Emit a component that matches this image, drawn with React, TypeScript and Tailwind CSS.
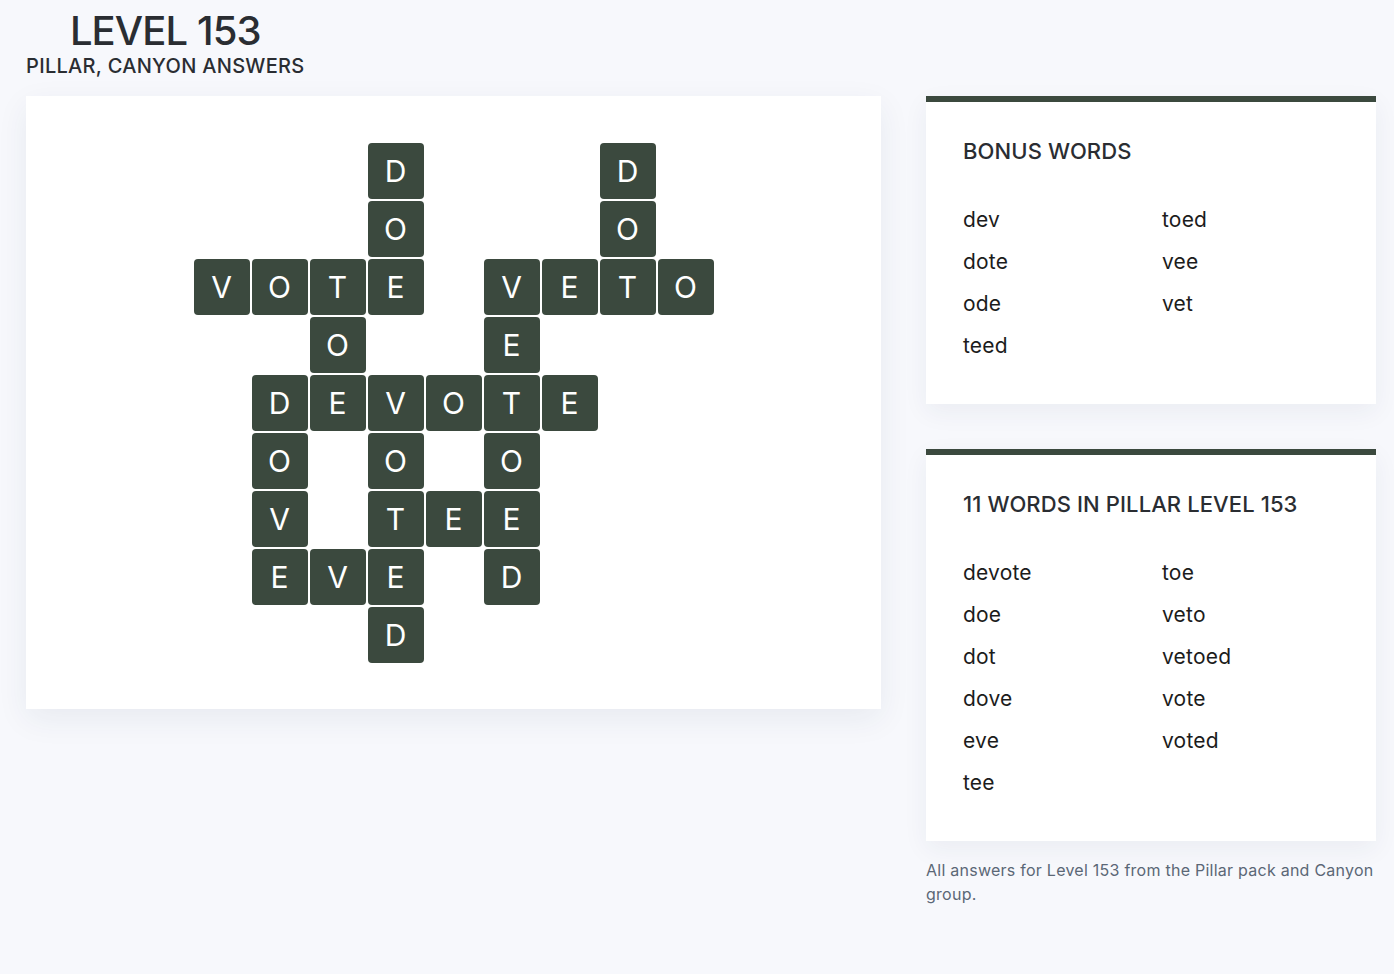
import React from "react";

const grid: string[] = [
  "...D...D.",
  "...O...O.",
  "VOTE.VETO",
  "..O..E...",
  ".DEVOTE..",
  ".O.O.O...",
  ".V.TEE...",
  ".EVE.D...",
  "...D.....",
];

const bonus = ["dev", "dote", "ode", "teed", "toed", "vee", "vet"];
const words = ["devote", "doe", "dot", "dove", "eve", "tee", "toe", "veto", "vetoed", "vote", "voted"];

function WordPanel({ title, items, rows }: { title: string; items: string[]; rows: number }) {
  const col1 = items.slice(0, rows);
  const col2 = items.slice(rows);
  return (
    <div className="bg-white border-t-[6px] border-[#3b493e] px-[37px] pt-[35px] pb-[37px] shadow-[0_8px_24px_rgba(30,50,90,0.06)]">
      <h2 className="text-[22px] leading-[28px] font-medium text-[#2a2d32] tracking-[0.1px]">{title}</h2>
      <div className="mt-[34px] flex">
        <div className="w-[199px] flex flex-col">
          {col1.map((w) => (
            <div key={w} className="h-[42px] leading-[42px] text-[21px] tracking-[0.2px] text-[#1c1c1c]">{w}</div>
          ))}
        </div>
        <div className="flex flex-col">
          {col2.map((w) => (
            <div key={w} className="h-[42px] leading-[42px] text-[21px] tracking-[0.2px] text-[#1c1c1c]">{w}</div>
          ))}
        </div>
      </div>
    </div>
  );
}

export default function App() {
  return (
    <div
      className="min-h-[974px] bg-[#f7f8fc] pt-[11px] pl-[26px] pr-[18px]"
      style={{ fontFamily: "Inter, 'Noto Sans', 'Liberation Sans', sans-serif" }}
    >
      <div className="w-fit text-center text-[#2a2d32]">
        <h1 className="text-[40px] leading-[40px] font-medium tracking-[-0.9px]">LEVEL 153</h1>
        <div className="mt-[1px] text-[20px] leading-[28px] font-medium tracking-[0.3px]">PILLAR, CANYON ANSWERS</div>
      </div>
      <div className="mt-[16px] flex items-start gap-[45px]">
        <div className="w-[855px] h-[613px] shrink-0 bg-white flex items-center justify-center shadow-[0_10px_30px_rgba(30,50,90,0.07)]">
          <div className="grid grid-cols-[repeat(9,56px)] grid-rows-[repeat(9,56px)] gap-[2px]">
            {grid.flatMap((row, r) =>
              row.split("").map((ch, c) =>
                ch === "." ? (
                  <div key={`${r}-${c}`} />
                ) : (
                  <div
                    key={`${r}-${c}`}
                    className="bg-[#3b493e] rounded-[4px] flex items-center justify-center text-white text-[30px] leading-none"
                  >
                    {ch}
                  </div>
                )
              )
            )}
          </div>
        </div>
        <div className="w-[450px] shrink-0 flex flex-col">
          <WordPanel title="BONUS WORDS" items={bonus} rows={4} />
          <div className="mt-[45px]">
            <WordPanel title="11 WORDS IN PILLAR LEVEL 153" items={words} rows={6} />
          </div>
          <p className="mt-[17px] text-[16px] leading-[24px] tracking-[0.25px] text-[#5b6776]">
            All answers for Level 153 from the Pillar pack and Canyon group.
          </p>
        </div>
      </div>
    </div>
  );
}
